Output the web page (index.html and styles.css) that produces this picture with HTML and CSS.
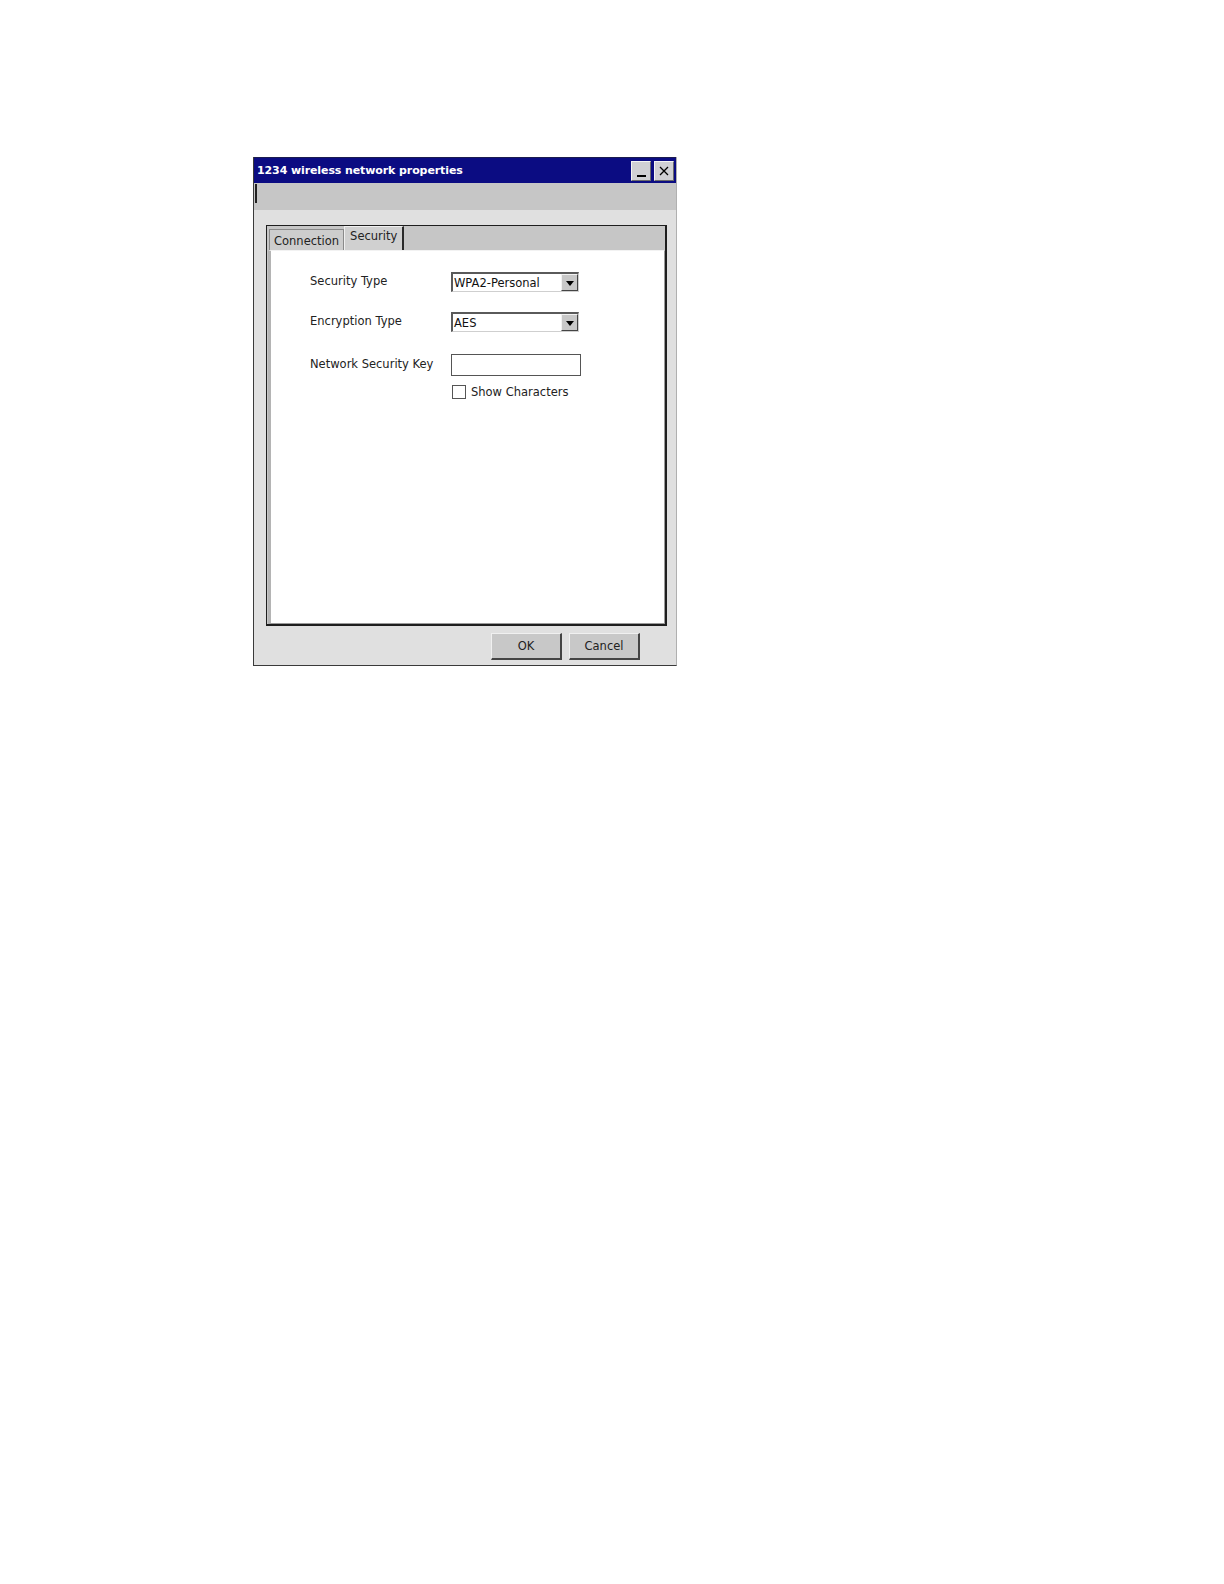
FILE: index.html
```html
<!DOCTYPE html>
<html>
<head>
<meta charset="utf-8">
<title>1234 wireless network properties</title>
<link rel="stylesheet" href="styles.css">
</head>
<body>
<div class="window">
  <div class="titlebar">
    <span class="title">1234 wireless network properties</span>
    <div class="tbuttons">
      <div class="tbtn"><span class="min-glyph"></span></div>
      <div class="tbtn">
        <svg width="10" height="10" viewBox="0 0 10 10"><path d="M1 1 L9 9 M9 1 L1 9" stroke="#000" stroke-width="1.3" fill="none"/></svg>
      </div>
    </div>
  </div>
  <div class="toolbar"><span class="grip"></span></div>
  <div class="body">
    <div class="tabframe">
      <div class="tabstrip">
        <div class="tab">Connection</div>
        <div class="tab active">Security</div>
      </div>
      <div class="panel">
        <div class="row row1">
          <span class="label">Security Type</span>
          <div class="combo"><span class="combo-text">WPA2-Personal</span><span class="drop"><span class="tri"></span></span></div>
        </div>
        <div class="row row2">
          <span class="label">Encryption Type</span>
          <div class="combo"><span class="combo-text">AES</span><span class="drop"><span class="tri"></span></span></div>
        </div>
        <div class="row row3">
          <span class="label">Network Security Key</span>
          <div class="textbox"></div>
        </div>
        <div class="row row4">
          <span class="label"></span>
          <div class="check"><span class="box"></span><span>Show Characters</span></div>
        </div>
      </div>
    </div>
    <div class="footer">
      <div class="btn">OK</div>
      <div class="btn">Cancel</div>
    </div>
  </div>
</div>
</body>
</html>
```

FILE: styles.css
```css
html, body {
  margin: 0;
  padding: 0;
  background: #ffffff;
}
body {
  font-family: "DejaVu Sans", "Noto Sans", sans-serif;
  font-size: 11.5px;
  color: #111;
}
.window {
  margin-left: 253px;
  margin-top: 157px;
  width: 424px;
  box-sizing: border-box;
  border-left: 1px solid #3a3a3a;
  border-bottom: 1px solid #3a3a3a;
  border-right: 1px solid #b0b0b0;
  background: #e0e0e0;
}
.titlebar {
  height: 25px;
  background: #0b0c82;
  display: flex;
  align-items: center;
  justify-content: space-between;
  padding: 0 2px 0 3px;
  border-top: 1px solid #1c1c50;
}
.title {
  color: #fff;
  font-weight: bold;
  font-size: 11px;
  letter-spacing: -0.1px;
}
.tbuttons {
  display: flex;
  gap: 3px;
}
.tbtn {
  width: 20px;
  height: 20px;
  box-sizing: border-box;
  background: #d0d0d4;
  border-top: 1px solid #f4f4f4;
  border-left: 1px solid #f4f4f4;
  border-right: 1px solid #6a6a6a;
  border-bottom: 1px solid #6a6a6a;
  display: flex;
  align-items: center;
  justify-content: center;
}
.min-glyph {
  width: 9px;
  height: 2px;
  background: #000;
  margin-top: 10px;
}
.toolbar {
  height: 27px;
  background: #c6c6c6;
  display: flex;
  align-items: flex-start;
  padding-top: 1px;
  box-sizing: border-box;
}
.grip {
  width: 2px;
  height: 19px;
  background: #222;
  margin-left: 1px;
}
.body {
  padding: 15px 0 5px 12px;
}
.tabframe {
  width: 401px;
  height: 401px;
  box-sizing: border-box;
  border: 1px solid #1e1e1e;
  border-right-width: 2px;
  border-bottom-width: 2px;
  background: #c6c6c6;
  display: flex;
  flex-direction: column;
}
.tabstrip {
  height: 24px;
  flex: none;
  display: flex;
  align-items: flex-end;
  padding-left: 2px;
}
.tab {
  height: 21px;
  box-sizing: border-box;
  padding: 2px 4px 0 4px;
  display: flex;
  align-items: center;
  background: #cdcdcd;
  border-top: 1px solid #8a8a8a;
  border-left: 1px solid #8a8a8a;
  border-right: 1px solid #8a8a8a;
  color: #222;
}
.tab.active {
  height: 24px;
  padding: 0 5px 5px 5px;
  background: #d0d0d0;
  border-top: 1px solid #f0f0f0;
  border-left: 1px solid #f0f0f0;
  border-right: 2px solid #2a2a2a;
}
.panel {
  flex: 1;
  background: #ffffff;
  margin: 0 0 0 1px;
  border-left: 3px solid #b4b4b4;
  border-right: 1px solid #9a9a9a;
  border-bottom: 1px solid #9a9a9a;
  border-top: 1px solid #f2f2f2;
  padding: 21px 0 0 39px;
}
.row {
  display: flex;
  align-items: center;
}
.label {
  width: 141px;
  flex: none;
  color: #222;
  padding-bottom: 2px;
}
.row2 { margin-top: 20px; }
.row3 { margin-top: 22px; }
.row4 { margin-top: 9px; }
.combo {
  width: 128px;
  height: 20px;
  box-sizing: border-box;
  border-top: 2px solid #5a5a5a;
  border-left: 2px solid #5a5a5a;
  border-right: 1px solid #cfcfcf;
  border-bottom: 1px solid #cfcfcf;
  background: #fff;
  display: flex;
  align-items: center;
  justify-content: space-between;
}
.combo-text {
  padding-left: 1px;
  color: #111;
}
.drop {
  width: 17px;
  height: 17px;
  box-sizing: border-box;
  background: #c8c8c8;
  border-top: 1px solid #f2f2f2;
  border-left: 1px solid #f2f2f2;
  border-right: 1px solid #444;
  border-bottom: 1px solid #444;
  display: flex;
  align-items: center;
  justify-content: center;
}
.tri {
  width: 0;
  height: 0;
  border-left: 4px solid transparent;
  border-right: 4px solid transparent;
  border-top: 5px solid #000;
  margin-top: 1px;
}
.textbox {
  width: 130px;
  height: 22px;
  box-sizing: border-box;
  border: 1px solid #555;
  background: #fff;
}
.check {
  display: flex;
  align-items: center;
  gap: 5px;
  color: #222;
}
.box {
  width: 14px;
  height: 14px;
  box-sizing: border-box;
  border: 1px solid #555;
  background: #fff;
  margin-left: 1px;
}
.footer {
  display: flex;
  justify-content: flex-end;
  gap: 7px;
  padding: 7px 36px 0 0;
}
.btn {
  width: 71px;
  height: 27px;
  box-sizing: border-box;
  background: #c8c8c8;
  border-top: 1px solid #f0f0f0;
  border-left: 1px solid #f0f0f0;
  border-right: 2px solid #444;
  border-bottom: 2px solid #444;
  display: flex;
  align-items: center;
  justify-content: center;
  color: #222;
}
```
